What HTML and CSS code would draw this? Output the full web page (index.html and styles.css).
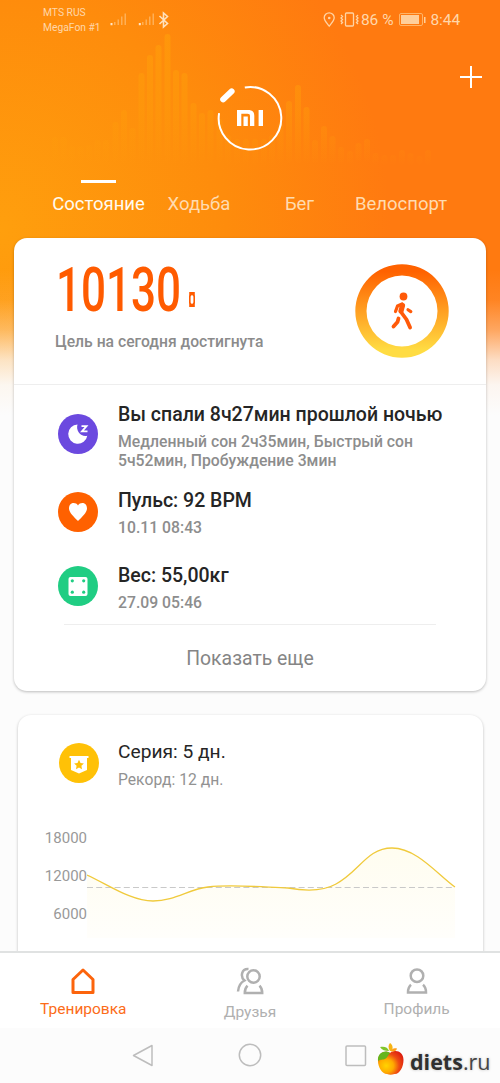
FILE: index.html
```html
<!DOCTYPE html>
<html lang="ru">
<head>
<meta charset="utf-8">
<title>Mi Fit</title>
<link rel="stylesheet" href="styles.css">
</head>
<body>
<div class="app">
  <main class="content">
    <svg class="equalizer" width="500" height="180" viewBox="0 0 500 180" fill="none">
      <defs>
        <linearGradient id="bars" gradientUnits="userSpaceOnUse" x1="0" y1="34" x2="0" y2="166">
          <stop offset="0" stop-color="#ff9f0a" stop-opacity=".6"/>
          <stop offset=".6" stop-color="#ff9f0a" stop-opacity=".36"/>
          <stop offset="1" stop-color="#ff9f0a" stop-opacity="0"/>
        </linearGradient>
      </defs>
      <path stroke="url(#bars)" stroke-width="6" stroke-linecap="round" d="M55 140V160M63.500 140V160M72 149V160M80.500 149V160M89 148V160M97.500 143V160M106 143V160M115.500 125V160M124 113V160M132.500 131V160M141.500 76V160M150 58V160M158.500 48V160M167.500 37V160M176 73V160M184.500 76V160M193.500 106V160M202 116V160M210.500 113V160M219.500 122V160M228 138V163M237 142V163M246 142V163M255 142V163M264 142V163M272 138V163M280.500 126V162M289 104V160M298 88V160M306.500 110V160M315 143V160M324 129V160M332.500 139V160M341 150V160M350 154V161M358.500 146V158M367 142V158M375.500 156V162M384.500 158V162M393 158V162M402 153V162M410.500 156V162M419.500 159V162M428 153V162"/>
    </svg>

    <header class="statusbar">
      <div class="carriers"><span>MTS RUS</span><span>MegaFon #1</span></div>
      <svg class="signal" width="60" height="18" viewBox="0 0 60 18">
        <g fill="#ffd9a8" opacity=".48"><path d="M4 11h1.500v3H4zM7.500 8.500H9V14H7.500zM11 5.500h1.500V14H11zM14.500 2.500H16V14h-1.500zM32 11h1.500v3H32zM35.500 8.500H37V14h-1.500zM39 5.500h1.500V14H39zM42.500 2.500H44V14h-1.500z"/></g>
        <path fill="#ffe5c8" d="M.500 12h2v2.200h-2zM28.800 12h2v2.200h-2z"/>
        <path d="M49.500 5l8 7.500-4 3.500V2l4 3.500-8 7.500" fill="none" stroke="#ffe1bd" stroke-width="1.600"/>
      </svg>
      <div class="status-right">
        <svg width="36" height="18" viewBox="0 0 36 18" fill="none" stroke="#ffd4a5" stroke-width="1.300">
          <path d="M6.200 15.200C3.800 12 1.200 9.600 1.200 6.800a5 5 0 0 1 10 0c0 2.800-2.600 5.200-5 8.400z"/>
          <circle cx="6.200" cy="7" r="1.300" fill="#ffd4a5" stroke="none"/>
          <rect x="22.500" y="2" width="8" height="13" rx="1"/>
          <path d="M18 4l1.500 1.500L18 7l1.500 1.500L18 10l1.500 1.500L18 13M35 4l-1.500 1.500L35 7l-1.500 1.500L35 10l-1.500 1.500L35 13"/>
        </svg>
        <span class="percent">86 %</span>
        <svg class="battery" width="27" height="14" viewBox="0 0 27 14"><rect x=".5" y=".5" width="23" height="12" rx="1.500" fill="none" stroke="#ffb467"/><path fill="#ffcf9b" d="M2 2h18v9H2zM25 4h1.500v6H25z"/></svg>
        <span class="clock">8:44</span>
      </div>
    </header>

    <div class="brand">
      <svg width="68" height="68" viewBox="0 0 68 68">
        <path d="M28.800 3.400A31.300 31.300 0 1 1 3.100 29.200" fill="none" stroke="#fff" stroke-width="2"/>
        <path d="M7.200 15.400L15.600 7.400" stroke="#fff" stroke-width="6" stroke-linecap="round"/>
        <path fill="#fff" d="M21 26h11.200c4.200 0 6.100 2.100 6.100 5.800V42h-4.300V32.200c0-1.800-.7-2.500-2.500-2.500h-6.200V42H21zM27.500 32.500h4.300V42h-4.300zM42.600 26H47v16h-4.400z"/>
      </svg>
      <svg class="plus" width="22" height="22" viewBox="0 0 22 22"><path d="M11 0v22M0 11h22" stroke="#fff" stroke-width="2"/></svg>
    </div>

    <nav class="tabs">
      <span class="tab tab-active">Состояние</span>
      <span class="tab">Ходьба</span>
      <span class="tab">Бег</span>
      <span class="tab">Велоспорт</span>
    </nav>

    <section class="card summary">
      <div class="steps">
        <div>
          <div class="count"><span class="number">10130</span>
            <svg class="band" width="6" height="15" viewBox="0 0 6 15"><path fill="#ff5b00" fill-rule="evenodd" d="M.2 0h5.600v3L6 4v7l-.2 1v3H.2v-3L0 11V4l.2-1zM3 2.800L1.600 4.500v6L3 12.200l1.400-1.700v-6z"/></svg>
          </div>
          <p class="goal">Цель на сегодня достигнута</p>
        </div>
        <svg class="ring" width="94" height="94" viewBox="0 0 94 94">
          <defs><linearGradient id="ring" x1="0" y1="0" x2="0" y2="1"><stop offset=".08" stop-color="#ff6200"/><stop offset=".92" stop-color="#ffdc43"/></linearGradient></defs>
          <path fill="url(#ring)" fill-rule="evenodd" d="M47 .3a46.700 46.700 0 0 1 0 93.400a46.700 46.700 0 0 1 0-93.400zM47 11.500a35.500 35.500 0 0 0 0 71a35.500 35.500 0 0 0 0-71z"/>
          <circle cx="48.500" cy="32.500" r="3.900" fill="#ff5a09"/>
          <g fill="none" stroke="#ff5a09" stroke-linecap="round" stroke-linejoin="round">
            <path stroke-width="3.200" d="M40.500 47.500l2-5.500 4.500-2"/>
            <path stroke-width="5.200" d="M47.500 41.500L46 47"/>
            <path stroke-width="3.800" d="M46 48l5.500 7.500 3.600 8M43.500 54.500l-1 3.500-4 4.500"/>
            <path stroke-width="3.200" d="M53 45.700l2.800 1.900"/>
          </g>
        </svg>
      </div>

      <div class="metric sleep">
        <svg width="40" height="40" viewBox="0 0 40 40"><circle cx="20" cy="20" r="20" fill="#6b49df"/><path fill="#fff" d="M19.500 10.500a9.600 9.600 0 1 0 9.800 11.200c-5.700 1.800-11.900-4.600-9.800-11.200z"/><path d="M23.500 12.200h5L24 17.300h5.500" fill="none" stroke="#fff" stroke-width="1.800"/></svg>
        <div><h2>Вы спали 8ч27мин прошлой ночью</h2><p>Медленный сон 2ч35мин, Быстрый сон<br>5ч52мин, Пробуждение 3мин</p></div>
      </div>
      <div class="metric pulse">
        <svg width="40" height="40" viewBox="0 0 40 40"><circle cx="20" cy="20" r="20" fill="#ff6100"/><path fill="#fff" d="M20 29C16 25 11 20.500 11 16.500c0-6 6.500-7 9-3 2.500-4 9-3 9 3 0 4-5 8.500-9 12.500z"/></svg>
        <div><h2>Пульс: 92 BPM</h2><p>10.11 08:43</p></div>
      </div>
      <div class="metric weight">
        <svg width="40" height="40" viewBox="0 0 40 40"><circle cx="20" cy="20" r="20" fill="#20cd83"/><rect x="10.500" y="11" width="19" height="19" rx="2" fill="#fff"/><g fill="#20cd83"><circle cx="14.300" cy="14.800" r="1.600"/><circle cx="25.700" cy="14.800" r="1.600"/><circle cx="14.300" cy="26.200" r="1.600"/><circle cx="25.700" cy="26.200" r="1.600"/></g></svg>
        <div><h2>Вес: 55,00кг</h2><p>27.09 05:46</p></div>
      </div>
      <div class="more">Показать еще</div>
    </section>

    <section class="card streak">
      <div class="streak-head">
        <svg width="40" height="40" viewBox="0 0 40 40"><circle cx="20" cy="20" r="20" fill="#ffc107"/><path fill="#fff" d="M10.500 13h19v2H28v12l-8 3.500-8-3.500V15h-1.500z"/><path fill="#ffc107" d="M20 16.800l1.500 3.100 3.400.5-2.500 2.400.6 3.400-3-1.600-3 1.600.6-3.400-2.500-2.400 3.400-.5z"/></svg>
        <div><h2>Серия: 5 дн.</h2><p>Рекорд: 12 дн.</p></div>
      </div>
      <div class="chart">
        <div class="axis"><span>18000</span><span>12000</span><span>6000</span></div>
        <svg width="370" height="125" viewBox="0 0 370 125">
          <defs><linearGradient id="area" x1="0" y1="0" x2="0" y2="1"><stop offset="0" stop-color="#fffdf0"/><stop offset="1" stop-color="#fffefb"/></linearGradient></defs>
          <path fill="url(#area)" d="M0 49C22 59 44 75 66 75C88 75 102 63 121 61C145 58 181 61.500 201 62C218 65 235 66 249 58C272 46 280 22 305 22C330 22 351 49 368 61V112H0z"/>
          <path d="M0 61.500H368" stroke="#c9c9c9" stroke-dasharray="6 3.200"/>
          <path fill="none" stroke="#f0ca3c" stroke-width="1.300" d="M0 49C22 59 44 75 66 75C88 75 102 63 121 61C145 58 181 61.500 201 62C218 65 235 66 249 58C272 46 280 22 305 22C330 22 351 49 368 61"/>
        </svg>
      </div>
    </section>
  </main>

  <nav class="bottom-nav">
    <a class="nav-item nav-active"><svg width="28" height="28" viewBox="0 0 28 28" fill="none" stroke="#fc640c" stroke-width="3" stroke-linejoin="round"><path d="M14 3L24 12.500V25.500H4V12.500z"/></svg><span>Тренировка</span></a>
    <a class="nav-item friends"><svg width="30" height="30" viewBox="0 0 30 30" fill="none" stroke="#b0b0b0" stroke-width="2.500"><circle cx="18.500" cy="9.500" r="6.200"/><path d="M12.500 18.700c-1.700 1.700-2.700 4-2.700 7.300h17.400c0-3.300-1-5.600-2.700-7.300M13.500 2C6.500 1.500 5 9.500 9.500 13.500 5.500 15.500 3.500 19 3 24.500"/></svg><span>Друзья</span></a>
    <a class="nav-item"><svg width="28" height="28" viewBox="0 0 28 28" fill="none" stroke="#b0b0b0" stroke-width="2.500"><circle cx="14" cy="8.700" r="6.300"/><path d="M8 17.800C6 19.500 5 22 5 25.500h18c0-3.500-1-6-3-7.700"/></svg><span>Профиль</span></a>
  </nav>

  <footer class="sysbar">
    <svg class="back" width="22" height="24" viewBox="0 0 22 24"><path d="M20 1.500v20L1.500 11.500z" fill="none" stroke="#bdbdbd" stroke-width="1.500" stroke-linejoin="round"/></svg>
    <svg class="home" width="24" height="24" viewBox="0 0 24 24"><circle cx="12" cy="12" r="10.700" fill="none" stroke="#bdbdbd" stroke-width="1.500"/></svg>
    <svg class="recent" width="22" height="22" viewBox="0 0 22 22"><rect x="1" y="1" width="19.500" height="19.500" rx="1" fill="none" stroke="#bdbdbd" stroke-width="1.500"/></svg>
    <svg class="apple" width="28" height="34" viewBox="0 0 28 34">
      <defs><radialGradient id="apple-body" cx=".32" cy=".62" r=".75"><stop offset="0" stop-color="#ffd400"/><stop offset=".38" stop-color="#ffab00"/><stop offset=".68" stop-color="#ee4b12"/><stop offset="1" stop-color="#dd2010"/></radialGradient></defs>
      <path fill="url(#apple-body)" d="M13 11c5-4 13.500-2 13.500 7 0 7-4 14.500-9 14-3 1-5 1-7.500 0C5 32 1 25 1 19 1 10 9 8 13 11z"/>
      <path fill="#65b51d" d="M1 19C0 11 8 7 13 11c-2 2-3 5-5 6s-5 0-7 2z"/>
      <path fill="#80c52a" d="M12 9C8 9 5 8 3 5c4-1 8 0 9 4z"/><path fill="#f6b414" d="M13 9c-2-3-2-6 0-8 3 2 3 5 2 8z"/><path fill="#ff9d16" d="M14 9.500c1-3 3-4 6-3-1 3-3 3-6 3z"/>
    </svg>
    <span class="watermark"><b>diets</b>.ru</span>
  </footer>
</div>
</body>
</html>
```
FILE: styles.css
```css
* { box-sizing: border-box; }
body { margin: 0; font-family: Roboto, "Noto Sans", sans-serif; }
h2, p { margin: 0; }
svg { display: block; flex: none; }

.app { display: flex; flex-direction: column; width: 500px; height: 1083px; background: #fcfcfc; }
.content {
  position: relative;
  height: 951px;
  overflow: hidden;
  background:
    linear-gradient(180deg, rgba(252,252,252,0) 270px, rgba(252,252,252,.08) 300px, rgba(252,252,252,.34) 330px, rgba(252,252,252,.76) 360px, rgba(252,252,252,.95) 385px, #fcfcfc 415px),
    radial-gradient(ellipse 390px 400px at 0 230px, #ff9f0d 0, #fe8c0c 58%, #ff7a10 100%);
}
.equalizer { position: absolute; left: 0; top: 0; }

.statusbar { position: relative; display: flex; height: 40px; padding: 0 40px 0 43px; color: #ffd7aa; }
.carriers { display: flex; flex-direction: column; width: 67px; padding-top: 5px; font-size: 10.300px; line-height: 15px; white-space: nowrap; }
.signal { margin-top: 11px; }
.status-right { display: flex; align-items: center; height: 40px; margin-left: auto; font-size: 15.500px; }
.percent { margin-left: 2px; white-space: nowrap; }
.battery { margin: 0 5px; }
.clock { letter-spacing: -.1px; }

.brand { position: relative; display: flex; justify-content: center; height: 140px; padding-top: 44px; }
.plus { position: absolute; right: 18px; top: 26px; }

.tabs { position: relative; display: grid; grid-template-columns: 97px 104px 97px 106px; height: 58px; padding-left: 50px; color: #ffdbb0; font-size: 18.500px; text-align: center; }
.tab { padding-top: 13px; line-height: 23px; white-space: nowrap; }
.tab-active { color: #fffaf0; }
.tab-active::before { content: ""; display: block; width: 35px; height: 3px; margin: -13px auto 10px; background: #fff; }

.card { position: relative; background: #fff; border-radius: 13px; box-shadow: 0 1px 3px rgba(0,0,0,.26); }
.summary { height: 453px; margin: 0 14px; }
.steps { display: flex; justify-content: space-between; height: 147px; padding: 26px 37px 0 41px; border-bottom: 1px solid #eee; }
.count { display: flex; align-items: flex-end; height: 56px; color: #ff5b00; }
.number { width: 126px; font-size: 62px; font-weight: 500; line-height: 62px; transform: translate(1px, 1px) scaleX(.71); transform-origin: left; white-space: nowrap; }
.band { margin: 0 0 13px 8px; }
.goal { margin-top: 13px; font-size: 15.700px; font-weight: 500; line-height: 18px; color: #8b8b8b; }

.metric { display: flex; gap: 20px; padding-left: 44px; white-space: nowrap; }
.metric h2 { font-size: 19.500px; font-weight: 500; line-height: 25px; color: #252525; }
.metric p { font-size: 15.750px; font-weight: 500; line-height: 19px; color: #8d8d8d; }
.sleep { height: 103px; padding-top: 17px; }
.sleep > svg { margin-top: 12px; }
.sleep p, .pulse p, .weight p { margin-top: 5px; }
.pulse { height: 75px; }
.pulse > svg { margin-top: 4px; }
.weight { height: 61px; }
.weight > svg { margin-top: 3px; }
.more { margin: 0 50px; padding-top: 22px; border-top: 1px solid #eee; text-align: center; font-size: 19.400px; line-height: 24px; color: #858585; }

.streak { height: 260px; margin: 24px 17px 0 18px; }
.streak-head { display: flex; gap: 19px; height: 111px; padding: 24px 0 0 41px; white-space: nowrap; }
.streak-head > svg { margin-top: 4px; }
.streak-head h2 { font-size: 19.200px; font-weight: 400; line-height: 25px; color: #262626; }
.streak-head p { margin-top: 6px; font-size: 15.700px; line-height: 19px; color: #929292; }
.chart { display: flex; padding-left: 19px; }
.axis { display: flex; flex-direction: column; width: 50px; font-size: 15px; line-height: 38px; color: #999; text-align: right; }
.chart > .axis { margin: -7px 0 0; }

.bottom-nav { display: grid; grid-template-columns: repeat(3, 1fr); height: 77px; padding-top: 14px; border-top: 2px solid #e0e2e2; background: #fff; }
.nav-item { display: flex; flex-direction: column; align-items: center; gap: 4px; font-size: 15.500px; line-height: 20px; color: #b0b0b0; }
.nav-active { color: #fc6c18; }
.friends { gap: 5px; }

.sysbar { display: flex; flex: 1; padding-left: 132px; background: #fcfcfc; }
.back { margin-top: 16px; }
.home { margin: 15px 0 0 84px; }
.recent { margin: 17px 0 0 83px; }
.apple { margin: 14px 0 0 10px; }
.watermark { margin: 21px 0 0 5px; font: 21.500px/26px "Open Sans", sans-serif; letter-spacing: 0; color: #454545; text-shadow: 0 0 3px #bbb; }
.watermark b { font-weight: 700; color: #303030; }
```
